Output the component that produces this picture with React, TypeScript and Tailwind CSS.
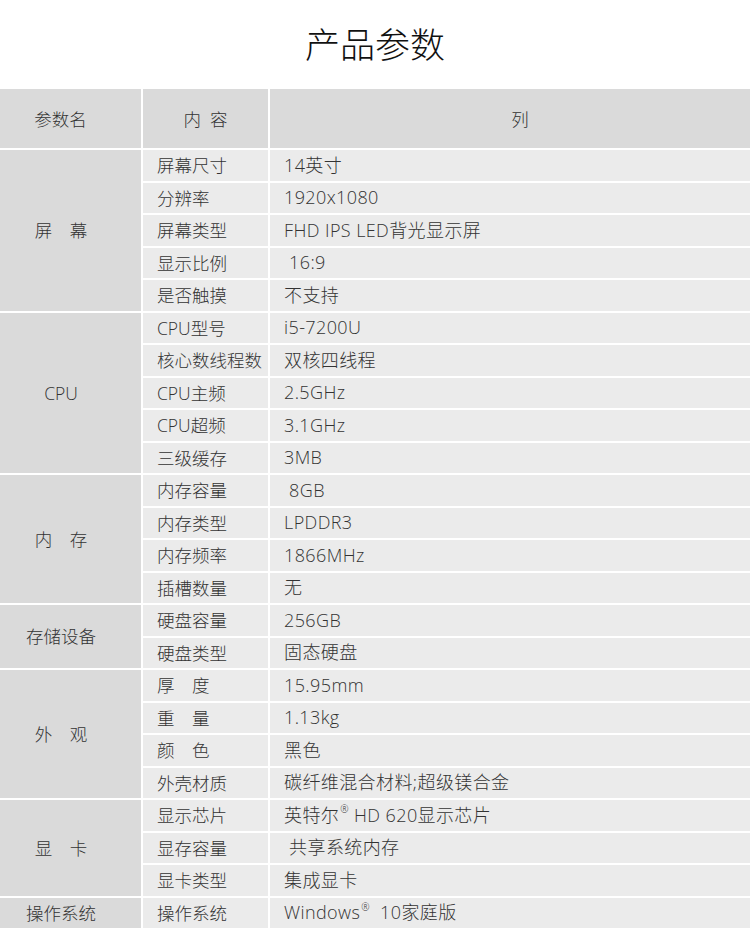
type Group = {
  label: string;
  rows: [string, React.ReactNode][];
};

const R = () => <sup className="text-[10px] align-super ml-[1px] -top-[0.6em]">®</sup>;

const GROUPS: Group[] = [
  {
    label: "屏　幕",
    rows: [
      ["屏幕尺寸", "14英寸"],
      ["分辨率", "1920x1080"],
      ["屏幕类型", "FHD IPS LED背光显示屏"],
      ["显示比例", " 16:9"],
      ["是否触摸", "不支持"],
    ],
  },
  {
    label: "CPU",
    rows: [
      ["CPU型号", "i5-7200U"],
      ["核心数线程数", "双核四线程"],
      ["CPU主频", "2.5GHz"],
      ["CPU超频", "3.1GHz"],
      ["三级缓存", "3MB"],
    ],
  },
  {
    label: "内　存",
    rows: [
      ["内存容量", " 8GB"],
      ["内存类型", "LPDDR3"],
      ["内存频率", "1866MHz"],
      ["插槽数量", "无"],
    ],
  },
  {
    label: "存储设备",
    rows: [
      ["硬盘容量", "256GB"],
      ["硬盘类型", "固态硬盘"],
    ],
  },
  {
    label: "外　观",
    rows: [
      ["厚　度", "15.95mm"],
      ["重　量", "1.13kg"],
      ["颜　色", "黑色"],
      ["外壳材质", "碳纤维混合材料;超级镁合金"],
    ],
  },
  {
    label: "显　卡",
    rows: [
      ["显示芯片", <>英特尔<R /> HD 620显示芯片</>],
      ["显存容量", " 共享系统内存"],
      ["显卡类型", "集成显卡"],
    ],
  },
  {
    label: "操作系统",
    rows: [["操作系统", <>Windows<R />&nbsp; 10家庭版</>]],
  },
];

export default function App() {
  return (
    <div
      className="w-[750px] h-[930px] overflow-hidden bg-white text-[#333]"
      style={{ fontFamily: '"Open Sans", "Noto Sans CJK SC", sans-serif' }}
    >
      <h1
        className="h-[89px] flex items-center justify-center text-[35px] font-light text-[#111] pb-[2px]"
        style={{ fontFamily: '"Noto Sans CJK SC", sans-serif' }}
      >
        产品参数
      </h1>

      <div className="grid grid-cols-[141px_125px_1fr] grid-rows-[59px] auto-rows-[30.5px] gap-[2px] text-[17.5px] font-light">
        {/* header */}
        <div className="bg-[#dadada] flex items-center justify-center pr-[20px] pt-[2px]">参数名</div>
        <div className="bg-[#dadada] flex items-center justify-center pt-[2px]">内&nbsp;&nbsp;容</div>
        <div className="bg-[#dadada] flex items-center justify-center pl-[20px] pt-[2px]">列</div>

        {GROUPS.map((g) => (
          <Rows key={g.label} group={g} />
        ))}
      </div>
    </div>
  );
}

function Rows({ group }: { group: Group }) {
  return (
    <>
      <div
        className="col-start-1 bg-[#dadada] flex items-center justify-center pr-[19px] whitespace-pre"
        style={{ gridRowEnd: `span ${group.rows.length}` }}
      >
        {group.label}
      </div>
      {group.rows.map(([k, v], i) => (
        <Cell key={i} k={k} v={v} />
      ))}
    </>
  );
}

function Cell({ k, v }: { k: string; v: React.ReactNode }) {
  return (
    <>
      <div className="col-start-2 bg-[#ebebeb] flex items-center pl-[14px] whitespace-pre">{k}</div>
      <div className="col-start-3 bg-[#ebebeb] flex items-center pl-[14px] whitespace-pre text-[18px] tracking-[0.4px]">
        {v}
      </div>
    </>
  );
}
